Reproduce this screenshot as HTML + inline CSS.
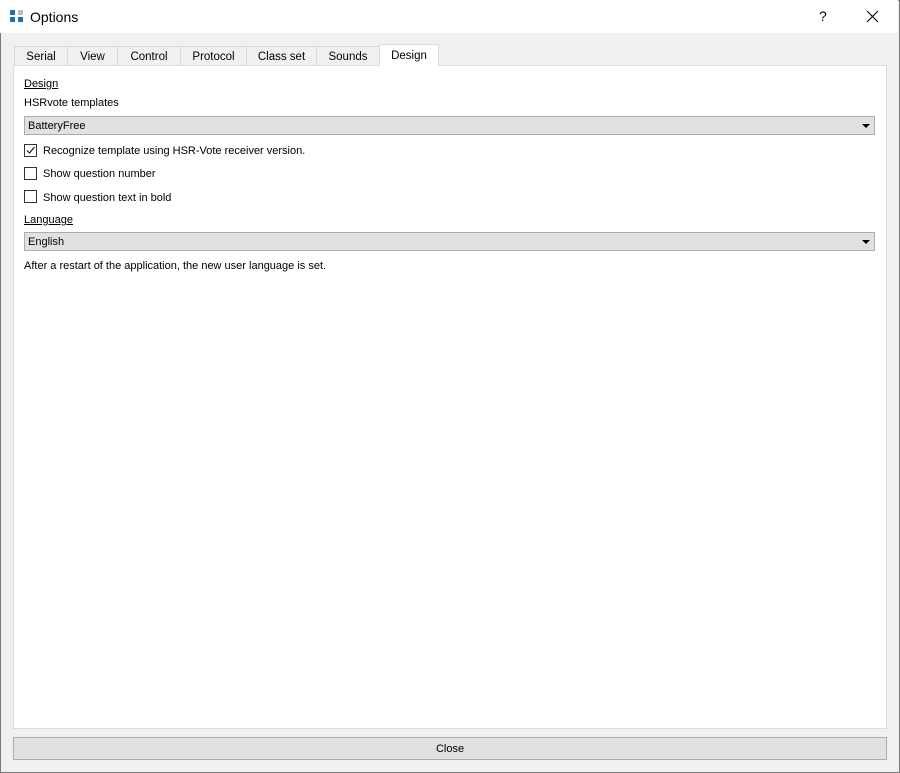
<!DOCTYPE html><html><head><style>
*{margin:0;padding:0;box-sizing:border-box}
body{width:900px;height:773px;background:#f0f0f0;font-family:"Liberation Sans",sans-serif;font-size:11px;color:#000;position:relative;overflow:hidden}
.win{position:absolute;left:0;top:0;width:900px;height:773px;border:1px solid #7a7a7a}
.title{position:absolute;left:0;top:0;width:898px;height:33px;background:#fff}
.t{position:absolute;white-space:nowrap}
.tab{position:absolute;top:46px;height:20px;background:#f0f0f0;border:1px solid #d9d9d9;border-bottom:none;text-align:center;line-height:20px;font-size:11.5px}
.panel{position:absolute;left:13px;top:65px;width:874px;height:664px;background:#fff;border:1px solid #dcdcdc}
.combo{position:absolute;left:24px;width:851px;height:19px;background:#e1e1e1;border:1px solid #adadad;line-height:19px;padding-left:3px}
.arr{position:absolute;right:4px;top:7px;width:0;height:0;border-left:4px solid transparent;border-right:4px solid transparent;border-top:4px solid #000}
.cb{position:absolute;left:24px;width:13px;height:13px;border:1px solid #333;background:#fff}
u{text-decoration:underline}
</style></head><body>
<div class="win"></div>
<div class="title">
<div style="position:absolute;left:10px;top:10px;width:5px;height:5px;background:#1e6fb5"></div>
<div style="position:absolute;left:18px;top:10px;width:5px;height:5px;background:#bbb"></div>
<div style="position:absolute;left:10px;top:17px;width:5px;height:5px;background:#1e6fb5"></div>
<div style="position:absolute;left:18px;top:17px;width:5px;height:5px;background:#1e6fb5"></div>
<div class="t" style="left:30px;top:9px;font-size:14px">Options</div>
<div class="t" style="left:819px;top:8px;font-size:14px">?</div>
<svg style="position:absolute;left:866px;top:10px" width="13" height="13"><path d="M1 1L12 12M12 1L1 12" stroke="#000" stroke-width="1.1"/></svg>
</div>
<div class="tab" style="left:14px;width:54px">Serial</div>
<div class="tab" style="left:67px;width:51px">View</div>
<div class="tab" style="left:117px;width:64px">Control</div>
<div class="tab" style="left:180px;width:67px">Protocol</div>
<div class="tab" style="left:246px;width:71px">Class set</div>
<div class="tab" style="left:316px;width:64px">Sounds</div>
<div class="panel"></div>
<div class="tab" style="left:379px;width:60px;top:44px;height:22px;background:#fff;border-color:#dcdcdc;line-height:22px">Design</div>
<div class="t" style="left:24px;top:78px"><u>Design</u></div>
<div class="t" style="left:24px;top:97px">HSRvote templates</div>
<div class="combo" style="top:116px">BatteryFree<div class="arr"></div></div>
<div class="cb" style="top:144px"><svg width="11" height="11" style="position:absolute;left:0;top:0"><path d="M2 5.5L4.5 8L9.5 2" stroke="#000" fill="none" stroke-width="1"/></svg></div>
<div class="t" style="left:43px;top:145px">Recognize template using HSR-Vote receiver version.</div>
<div class="cb" style="top:167px"></div>
<div class="t" style="left:43px;top:168px">Show question number</div>
<div class="cb" style="top:190px"></div>
<div class="t" style="left:43px;top:192px">Show question text in bold</div>
<div class="t" style="left:24px;top:214px"><u>Language</u></div>
<div class="combo" style="top:232px">English<div class="arr"></div></div>
<div class="t" style="left:24px;top:260px">After a restart of the application, the new user language is set.</div>
<div style="position:absolute;left:13px;top:737px;width:874px;height:23px;background:#e1e1e1;border:1px solid #adadad;text-align:center;line-height:23px">Close</div>
</body></html>
